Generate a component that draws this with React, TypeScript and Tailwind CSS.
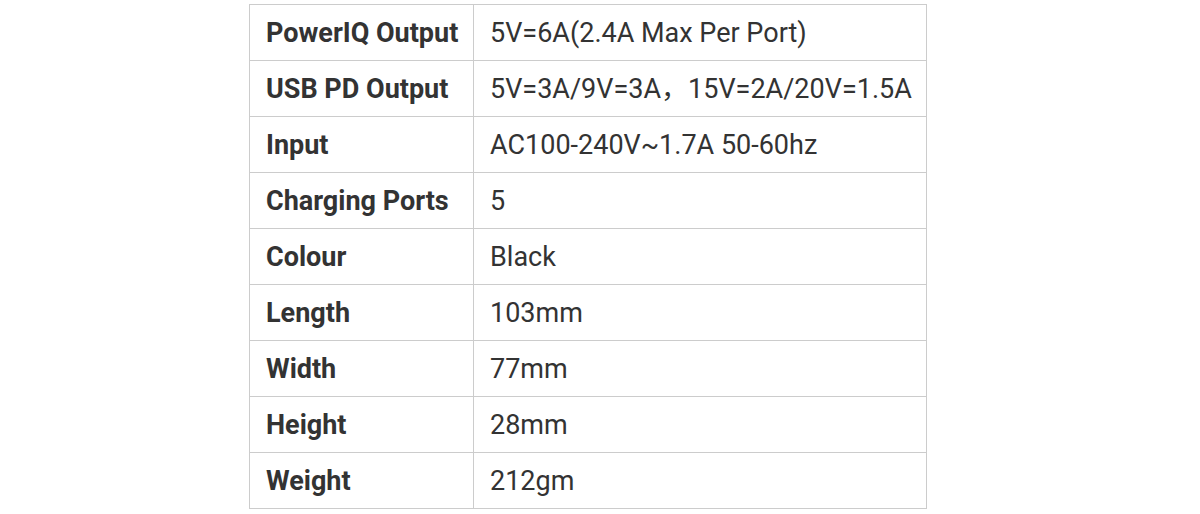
const rows: [string, string][] = [
  ['PowerIQ Output', '5V=6A(2.4A Max Per Port)'],
  ['USB PD Output', '5V=3A/9V=3A，15V=2A/20V=1.5A'],
  ['Input', 'AC100-240V~1.7A 50-60hz'],
  ['Charging Ports', '5'],
  ['Colour', 'Black'],
  ['Length', '103mm'],
  ['Width', '77mm'],
  ['Height', '28mm'],
  ['Weight', '212gm'],
]

export default function App() {
  return (
    <div
      className="min-h-screen bg-white pl-[249px] pt-[4px] text-[#333333]"
      style={{ fontFamily: 'Roboto, "Noto Sans CJK SC", sans-serif' }}
    >
      <table className="w-[678px] table-fixed border-collapse text-[27px] leading-[30px]">
        <colgroup>
          <col className="w-[224px]" />
          <col />
        </colgroup>
        <tbody>
          {rows.map(([label, value]) => (
            <tr key={label} className="h-[56px]">
              <td className="whitespace-nowrap border border-[#cccccc] px-[16px] font-bold">{label}</td>
              <td className="whitespace-nowrap border border-[#cccccc] px-[16px]">{value}</td>
            </tr>
          ))}
        </tbody>
      </table>
    </div>
  )
}
